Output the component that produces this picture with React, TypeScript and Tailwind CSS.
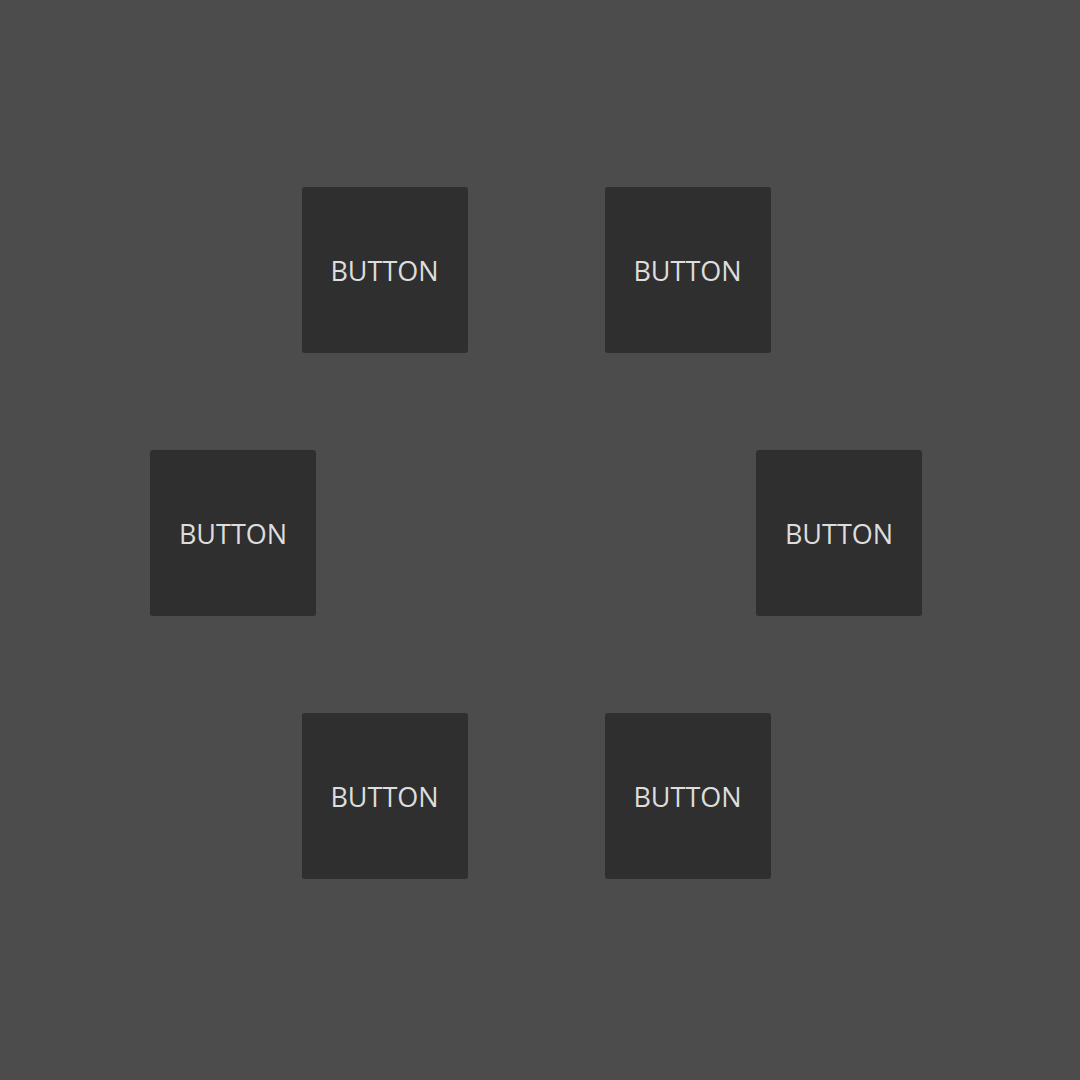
const Btn = () => (
  <button className="flex h-[166px] w-[166px] items-center justify-center rounded-[3px] bg-[#2f2f2f] font-['Open_Sans',sans-serif] text-[27px] font-medium leading-none text-[#dddddd]">
    BUTTON
  </button>
);

export default function App() {
  return (
    <div className="flex h-[1080px] w-[1080px] flex-col items-center gap-[97px] bg-[#4c4c4c] pr-2 pt-[187px]">
      <div className="flex gap-[137px]">
        <Btn />
        <Btn />
      </div>
      <div className="flex gap-[440px]">
        <Btn />
        <Btn />
      </div>
      <div className="flex gap-[137px]">
        <Btn />
        <Btn />
      </div>
    </div>
  );
}
